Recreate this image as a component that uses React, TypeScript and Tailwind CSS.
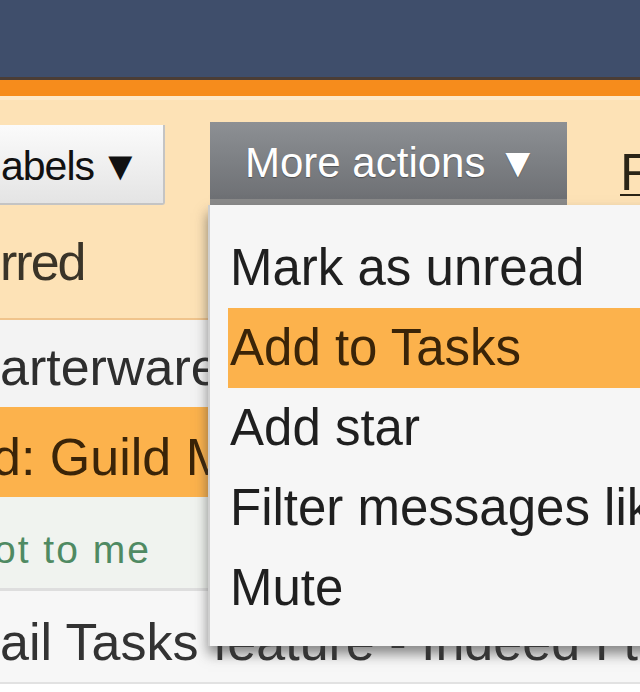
import React from "react";

export default function App() {
  return (
    <div className="relative w-[640px] h-[692px] overflow-hidden bg-white font-['Liberation_Sans',Arial,sans-serif]">
      {/* top header */}
      <div className="h-[77px] bg-[#3f4e6b]" />
      <div className="h-[3px] bg-[#4b3d35]" />
      <div className="h-[16px] bg-[#f68c1c]" />

      {/* toolbar + select area */}
      <div className="h-[222px] bg-[#fde2b6] flex flex-col">
        <div className="h-[4px] bg-[#fde9c8]" />
        <div className="flex items-start pt-[22px] h-[109px] w-[900px]">
          {/* Labels button */}
          <div className="shrink-0 mt-[3px] w-[165px] h-[80px] overflow-hidden bg-gradient-to-b from-[#fbfbfb] to-[#e4e4e4] border-r-2 border-b-2 border-[#c4c4c4] rounded-br-[3px] flex items-center">
            <span className="text-[41px] leading-[41px] text-[#111] whitespace-nowrap pl-[1px] pt-[4px] tracking-[-1px]">
              abels<span className="ml-[6px]">▼</span>
            </span>
          </div>
          {/* More actions button */}
          <div className="shrink-0 ml-[45px] w-[357px] h-[83px] bg-gradient-to-b from-[#8d9094] via-[#7d8084] to-[#6e7074] border-b-[6px] border-[#8a8a8a] flex items-center">
            <span className="pl-[35px] pt-[4px] text-[42px] leading-[42px] text-white whitespace-nowrap [text-shadow:0_1px_1px_rgba(0,0,0,0.35)]">
              More actions ▼
            </span>
          </div>
          {/* Refresh link */}
          <div className="shrink-0 ml-[53px] mt-[24px] text-[52px] leading-[52px] text-[#2a2416] underline decoration-2 underline-offset-[4px] whitespace-nowrap">
            Refresh
          </div>
        </div>
        <div className="pt-[27px] text-[52px] leading-[52px] tracking-[-2px] text-[#3a3428] whitespace-nowrap">rred</div>
      </div>
      <div className="h-[2px] bg-[#f0c48c]" />

      {/* message rows */}
      <div className="h-[87px] bg-[#f3f3f3] pt-[21px] text-[52px] leading-[52px] text-[#2e2e2e] whitespace-nowrap">
        arterware
      </div>
      <div className="h-[90px] bg-[#fcb24c] pt-[24px] text-[52px] leading-[52px] text-[#3a2408] whitespace-nowrap">
        <span className="ml-[-8px]">d: Guild Meeting</span>
      </div>
      <div className="h-[91px] bg-[#f0f3ef] pt-[33px] text-[39px] leading-[39px] tracking-[2px] text-[#4f8a62] whitespace-nowrap">
        <span className="ml-[-6px]">ot to me</span>
      </div>
      <div className="h-[3px] bg-[#dedede]" />
      <div className="h-[91px] bg-[#f7f7f7] pt-[25px] text-[52px] leading-[52px] text-[#333] whitespace-nowrap">
        ail Tasks feature - Indeed I think
      </div>
      <div className="h-[2px] bg-[#e2e2e2]" />

      {/* dropdown menu */}
      <div className="absolute left-[208px] top-[205px] w-[460px] h-[441px] bg-[#f6f6f6] border-l-2 border-[#cfcfcf] shadow-[0_8px_12px_rgba(60,60,60,0.6)] pt-[23px]">
        <div className="flex flex-col text-[51px] leading-[80px] text-[#1f1f1f] whitespace-nowrap">
          <div className="ml-[18px] h-[80px] pl-[2px]">Mark as unread</div>
          <div className="ml-[18px] h-[80px] pl-[2px] bg-[#fcb24c] text-[#3a2408]">Add to Tasks</div>
          <div className="ml-[18px] h-[80px] pl-[2px]">Add star</div>
          <div className="ml-[18px] h-[80px] pl-[2px]">Filter messages like these</div>
          <div className="ml-[18px] h-[80px] pl-[2px]">Mute</div>
        </div>
      </div>
    </div>
  );
}
